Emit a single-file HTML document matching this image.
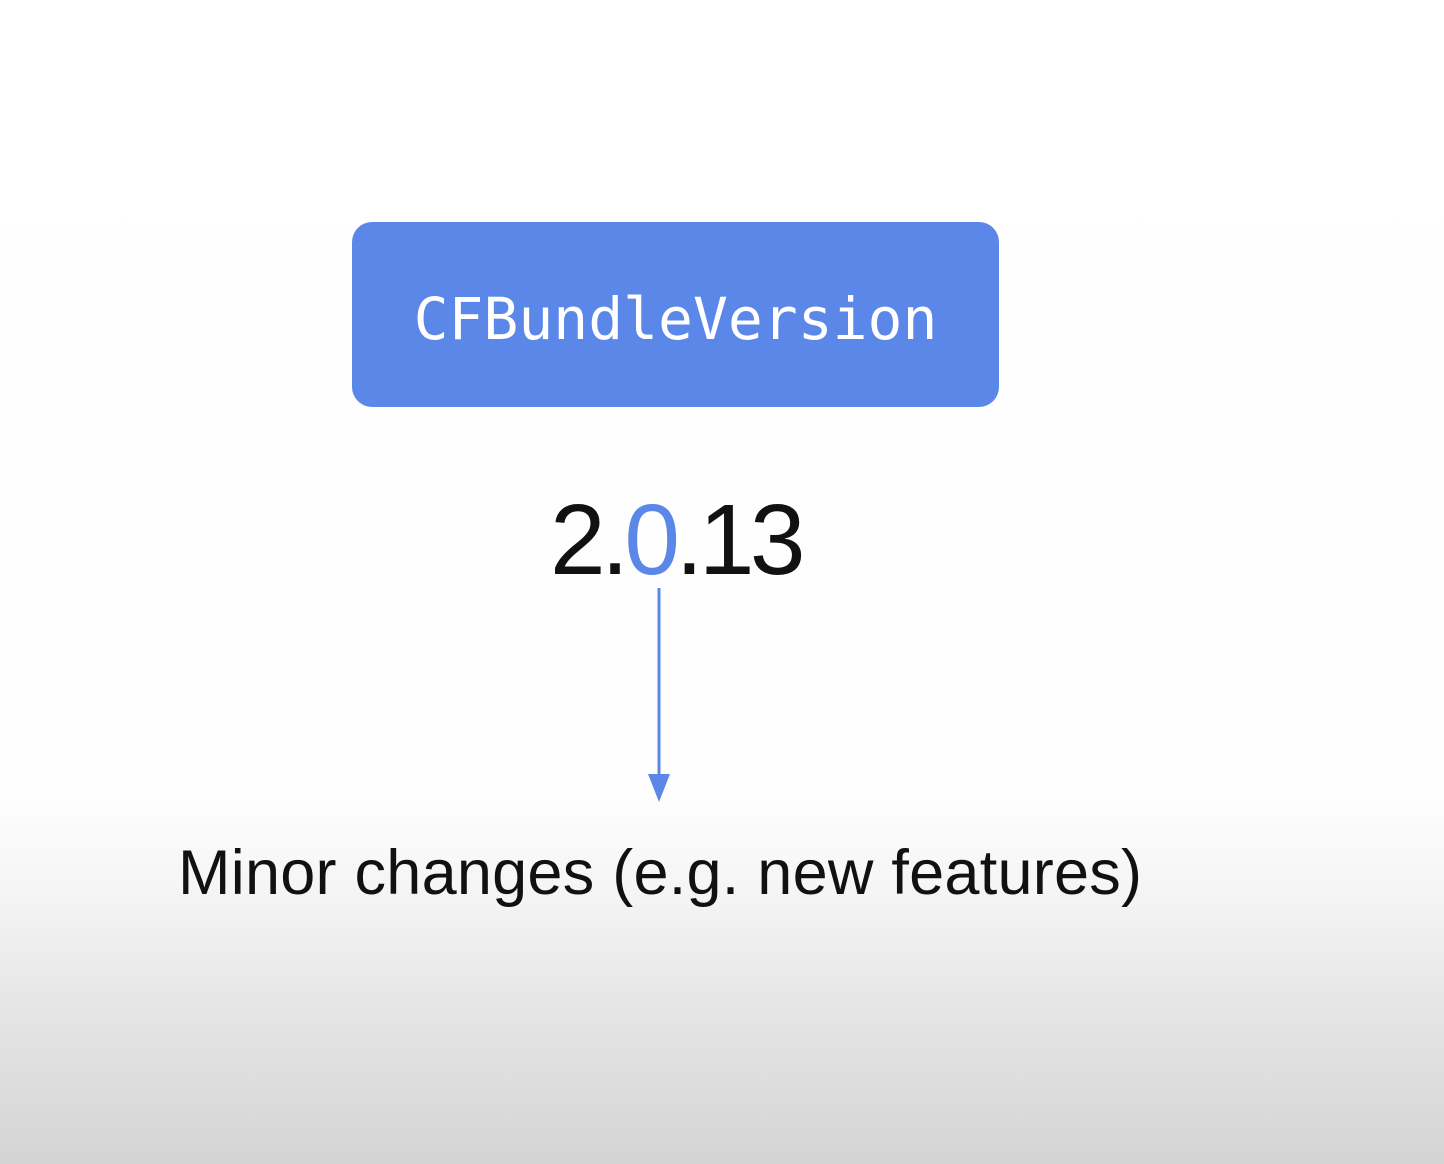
<!DOCTYPE html>
<html><head><style>
html,body{margin:0;padding:0}
body{width:1444px;height:1164px;position:relative;overflow:hidden;
background:linear-gradient(to bottom,#fff 0,#fefefe 790px,#f4f4f4 900px,#e6e6e6 1000px,#d4d4d4 1164px);}
.box{position:absolute;left:352px;top:222px;width:647px;height:185px;background:#5b88e8;border-radius:20px;}
.box span{position:absolute;left:0;right:0;top:50%;transform:translateY(-50%);text-align:center;color:#fff;font-family:"DejaVu Sans Mono","Liberation Mono",monospace;font-size:58px;line-height:1;margin-top:4px}
.ver{position:absolute;left:550px;top:490px;font-family:"Liberation Sans",sans-serif;font-size:100px;line-height:1;color:#111;letter-spacing:-4.5px;white-space:nowrap}
.ver b{font-weight:normal;color:#5b88e8}
.cap{position:absolute;left:178px;top:842px;font-family:"Liberation Sans",sans-serif;font-size:63px;line-height:1;color:#111;white-space:nowrap;letter-spacing:0.25px}
</style></head><body>
<div class="box"><span>CFBundleVersion</span></div>
<div class="ver">2.<b>0</b>.13</div>
<svg style="position:absolute;left:0;top:0" width="1444" height="1164">
<line x1="659" y1="588" x2="659" y2="778" stroke="#5b88e8" stroke-width="3"/>
<polygon points="648,774 670,774 659,802" fill="#5b88e8"/>
</svg>
<div class="cap">Minor changes (e.g. new features)</div>
</body></html>
